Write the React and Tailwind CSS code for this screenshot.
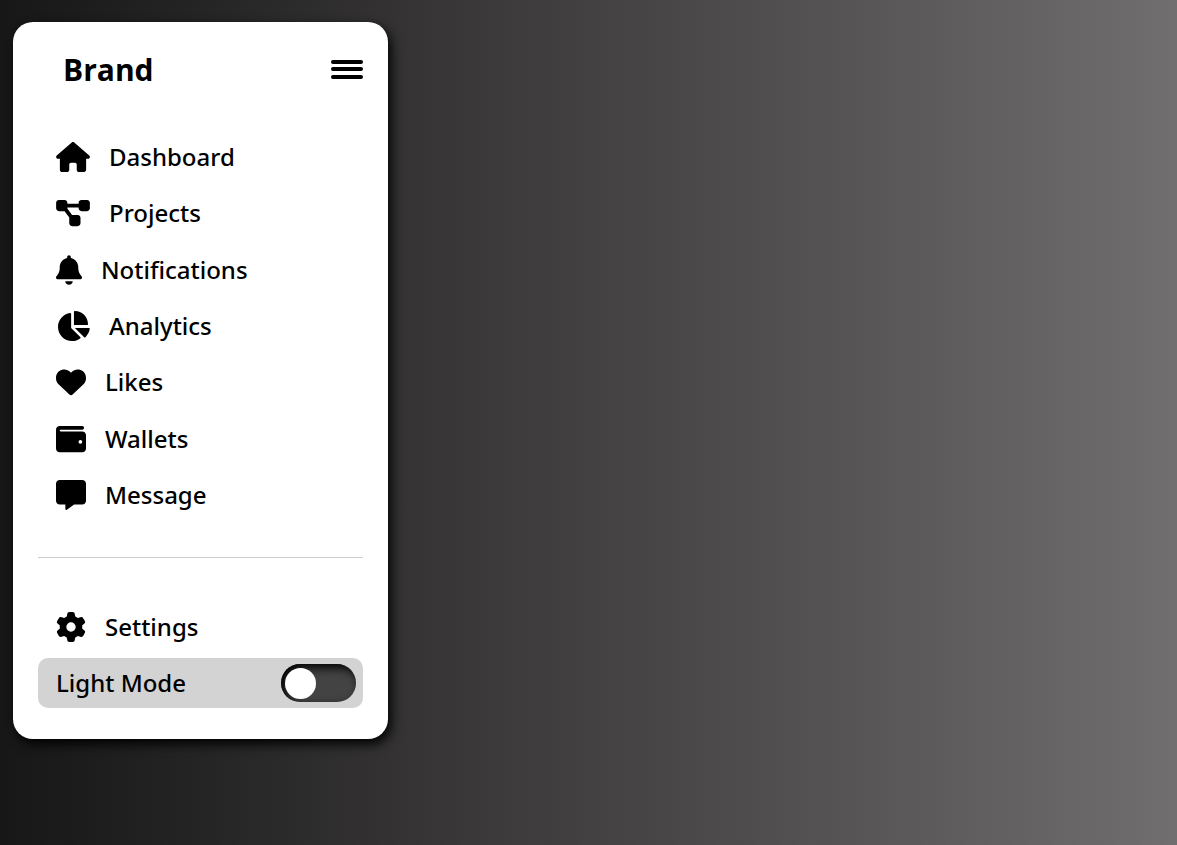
import { FaHouse, FaDiagramProject, FaBell, FaChartPie, FaHeart, FaWallet, FaMessage, FaGear } from "react-icons/fa6";

const links = [
  { label: "Dashboard", Icon: FaHouse, size: "w-[34px]" },
  { label: "Projects", Icon: FaDiagramProject, size: "w-[34px]" },
  { label: "Notifications", Icon: FaBell, size: "w-[26px]" },
  { label: "Analytics", Icon: FaChartPie, size: "w-[34px]" },
  { label: "Likes", Icon: FaHeart, size: "w-[30px]" },
  { label: "Wallets", Icon: FaWallet, size: "w-[30px]" },
  { label: "Message", Icon: FaMessage, size: "w-[30px]" },
];

function NavItem({ label, Icon, size }) {
  return (
    <li>
      <a href="#" className="flex h-[50px] items-center gap-[19px] rounded-lg px-[18px]">
        <Icon className={`h-[30px] shrink-0 ${size}`} aria-hidden="true" />
        {label}
      </a>
    </li>
  );
}

export default function App() {
  return (
    <div className="min-h-screen bg-linear-to-r from-[#171717] via-[#3a3838] via-40% to-[#706e6f] px-[13px] py-[22px] font-['Noto_Sans',sans-serif] text-black">
      <aside className="w-[375px] max-w-full rounded-[20px] bg-white px-[25px] pt-[25px] pb-[31px] shadow-[3px_5px_12px_black]">
        <header className="flex h-11 items-center justify-between pl-[25px]">
          <h1 className="font-['Open_Sans',sans-serif] text-[30px] leading-[41px] font-bold">Brand</h1>
          <button type="button" aria-label="Toggle menu" className="flex h-[19px] w-8 flex-col justify-between">
            <span className="h-1 w-full rounded-full bg-black" />
            <span className="h-1 w-full rounded-full bg-black" />
            <span className="h-1 w-full rounded-full bg-black" />
          </button>
        </header>
        <nav className="text-2xl font-medium">
          <ul className="mt-[41px] flex min-h-[388px] flex-col justify-between">
            {links.map((link) => <NavItem key={link.label} {...link} />)}
          </ul>
          <hr className="mt-[37px] border-[#ccc]" />
          <ul className="mt-[44px]">
            <NavItem label="Settings" Icon={FaGear} size="w-[30px]" />
          </ul>
        </nav>
        <label className="mt-[6px] flex h-[50px] cursor-pointer items-center justify-between rounded-[10px] bg-[#d3d3d3] pr-[7px] pl-[18px] text-2xl font-medium">
          Light Mode
          <input type="checkbox" role="switch" className="flex h-[38px] w-[75px] appearance-none items-center rounded-full bg-[#434343] px-1 shadow-[inset_4px_4px_10px_black] before:size-[31px] before:rounded-full before:bg-white before:content-['']" />
        </label>
      </aside>
    </div>
  );
}
